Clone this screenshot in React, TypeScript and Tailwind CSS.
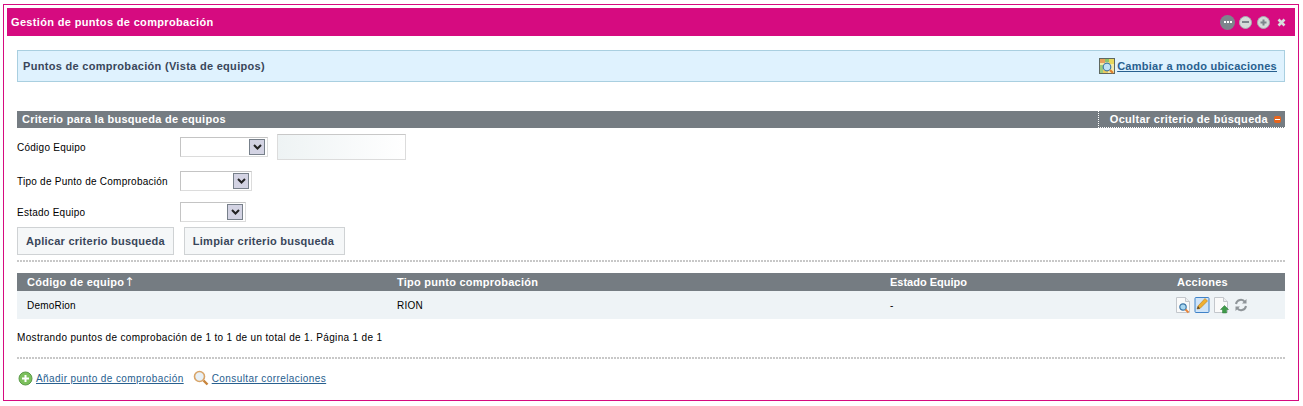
import { ReactNode } from 'react';

const SANS = "font-['Liberation_Sans',Arial,sans-serif]";

function FakeSelect({ width }: { width: string }) {
    return (
        <div className={`${width} h-[20px] flex items-center justify-end pr-[2px] bg-white border border-[#dcdcdc] border-t-[#c4c4c4] border-l-[#c4c4c4]`}>
            <div className="w-[16px] h-[16px] flex items-center justify-center bg-[#d3d3e3] border border-[#77808a]">
                <svg width="9" height="6" viewBox="0 0 9 6">
                    <path d="M1 1 L4.5 4.5 L8 1" fill="none" stroke="#222" strokeWidth="2" />
                </svg>
            </div>
        </div>
    );
}

function FormRow({ label, height, children }: { label: string; height: string; children: ReactNode }) {
    return (
        <div className={`flex items-center ${height}`}>
            <label className="w-[163px] text-[10px] text-black tracking-[0.25px]">{label}</label>
            {children}
        </div>
    );
}

function WindowButton({ children, className }: { children: ReactNode; className: string }) {
    return <div className={`rounded-full flex items-center justify-center ${className}`}>{children}</div>;
}

function MapIcon() {
    return (
        <svg width="16" height="16" viewBox="0 0 16 16" className="shrink-0">
            <rect x="0.5" y="0.5" width="15" height="15" fill="#f4e9a8" stroke="#5f6860" />
            <path d="M1 1h5v4H1z" fill="#e8a05c" />
            <path d="M6 1h4v3H6z" fill="#8cc46c" />
            <path d="M10 1h5v5h-5z" fill="#e9d85c" />
            <path d="M1 7h3v8H1z" fill="#9ccc7c" />
            <path d="M4 12h5v3H4z" fill="#e9c860" />
            <circle cx="8" cy="9" r="3.8" fill="#bfe2f6" stroke="#3f78a8" strokeWidth="1.2" />
            <path d="M11 12l3 3" stroke="#e08030" strokeWidth="2.200" />
        </svg>
    );
}

function DocBase({ children }: { children?: ReactNode }) {
    return (
        <svg width="16" height="18" viewBox="0 0 16 18" className="shrink-0">
            <path d="M1.5 1.5h9l4 4v11h-13z" fill="#fafafa" stroke="#c3c7cc" />
            <path d="M10.5 1.5v4h4" fill="#eceef0" stroke="#c3c7cc" />
            {children}
        </svg>
    );
}

function ActionIcons() {
    return (
        <div className="flex items-center gap-[3px]">
            <DocBase>
                <circle cx="8" cy="11" r="3.2" fill="#a9d8f2" stroke="#3f78a8" strokeWidth="1.2" />
                <path d="M10.5 13.5l3 3" stroke="#e8843a" strokeWidth="2" />
            </DocBase>
            <svg width="16" height="18" viewBox="0 0 16 18" className="shrink-0">
                <rect x="1" y="1.5" width="14" height="15" rx="1" fill="#cfe4f8" stroke="#3f82c8" />
                <path d="M3 13 L4 10 L11 2.5 L13.5 5 L6 12.5z" fill="#f0b030" stroke="#b87818" strokeWidth="0.6" />
                <path d="M3 13l1-3 2 2.5z" fill="#5a4a30" />
            </svg>
            <DocBase>
                <path d="M11.5 9.5l4 4h-2v3.5h-4V13.500h-2z" fill="#3f9a4a" stroke="#2c7a38" strokeWidth="0.5" />
            </DocBase>
            <svg width="14" height="14" viewBox="0 0 14 14" className="shrink-0 ml-[2px]">
                <path d="M2 6a5 5 0 0 1 9-2" fill="none" stroke="#8f9599" strokeWidth="2" />
                <path d="M12.500 1v4.500H8z" fill="#8f9599" />
                <path d="M12 8a5 5 0 0 1-9 2" fill="none" stroke="#8f9599" strokeWidth="2" />
                <path d="M1.500 13V8.500H6z" fill="#8f9599" />
            </svg>
        </div>
    );
}

function Dotted() {
    return <div className="h-[2px] bg-[repeating-linear-gradient(90deg,#c8c8c8_0,#c8c8c8_2px,#ffffff_2px,#ffffff_3px)]" />;
}

export default function App() {
    return (
        <div className={`w-[1303px] h-[406px] bg-white pt-[4px] pl-[3px] ${SANS}`}>
            <div className="w-[1296px] h-[397px] border border-[#d60b80] pt-[3px] pl-[3px]">
                {/* Title bar */}
                <div className="w-[1288px] h-[28px] bg-[#d60b80] flex items-center justify-between pl-[4px] pr-[9px]">
                    <h1 className="text-[11px] font-bold text-white tracking-[0.34px]">Gestión de puntos de comprobación</h1>
                    <div className="flex items-center gap-[4px]">
                        <WindowButton className="w-[15px] h-[15px] bg-[#7d858c] gap-[1px]">
                            <span className="w-[2px] h-[2px] bg-white" />
                            <span className="w-[2px] h-[2px] bg-white" />
                            <span className="w-[2px] h-[2px] bg-white" />
                        </WindowButton>
                        <WindowButton className="w-[13px] h-[13px] bg-[#d5dbd9] border border-[#a9b0b2]">
                            <span className="w-[7px] h-[2px] bg-[#7d858c]" />
                        </WindowButton>
                        <WindowButton className="w-[13px] h-[13px] ml-[1px] bg-[#d5dbd9] border border-[#a9b0b2]">
                            <svg width="7" height="7" viewBox="0 0 7 7">
                                <path d="M3.500 0.500v6M0.500 3.500h6" stroke="#7d858c" strokeWidth="2" />
                            </svg>
                        </WindowButton>
                        <svg width="9" height="9" viewBox="0 0 9 9" className="ml-[3px] mt-[1px]">
                            <path d="M1.500 1.500l6 6M7.500 1.500l-6 6" stroke="#d8dedc" strokeWidth="2.600" />
                        </svg>
                    </div>
                </div>

                <div className="w-[1268px] ml-[10px]">
                    {/* Info box */}
                    <div className="mt-[14px] h-[32px] bg-[#dff2fe] border border-[#a9cfe0] flex items-center justify-between pl-[5px] pr-[7px]">
                        <h2 className="text-[11px] font-bold text-[#39465a] tracking-[0.3px]">Puntos de comprobación (Vista de equipos)</h2>
                        <a className="flex items-center gap-[2px] text-[11px] font-bold text-[#28608f] underline tracking-[0.27px]">
                            <MapIcon />
                            Cambiar a modo ubicaciones
                        </a>
                    </div>

                    {/* Search criteria */}
                    <div className="mt-[29px] h-[17px] bg-[#757c82] flex items-center justify-between pl-[5px]">
                        <span className="text-[11px] font-bold text-white tracking-[0.28px]">Criterio para la busqueda de equipos</span>
                        <div className="w-[187px] h-full border-l border-b border-dotted border-white flex items-center justify-end gap-[6px] pr-[4px]">
                            <span className="text-[11px] font-bold text-white tracking-[0.3px]">Ocultar criterio de búsqueda</span>
                            <span className="w-[7px] h-[7px] rounded-[2px] bg-[#e8651c] flex items-center justify-center">
                                <span className="w-[5px] h-[1px] bg-white" />
                            </span>
                        </div>
                    </div>

                    <div className="mt-[6px]">
                        <FormRow label="Código Equipo" height="h-[26px]">
                            <FakeSelect width="w-[88px]" />
                            <div className="ml-[9px] w-[129px] h-[26px] border border-[#dcdcdc] border-t-[#c8c8c8] bg-gradient-to-r from-[#eef3f4] to-white" />
                        </FormRow>
                    </div>
                    <div className="mt-[9px]">
                        <FormRow label="Tipo de Punto de Comprobación" height="h-[24px]">
                            <FakeSelect width="w-[72px]" />
                        </FormRow>
                    </div>
                    <div className="mt-[7px]">
                        <FormRow label="Estado Equipo" height="h-[24px]">
                            <FakeSelect width="w-[66px]" />
                        </FormRow>
                    </div>

                    <div className="mt-[3px] flex gap-[10px]">
                        <button className="w-[157px] h-[28px] bg-[#f5f7f8] border border-[#cfd2d4] text-[11px] font-bold text-[#39465a] tracking-[0.25px]">Aplicar criterio busqueda</button>
                        <button className="w-[161px] h-[28px] pr-[2px] bg-[#f5f7f8] border border-[#cfd2d4] text-[11px] font-bold text-[#39465a] tracking-[0.25px]">Limpiar criterio busqueda</button>
                    </div>

                    <div className="mt-[5px]">
                        <Dotted />
                    </div>

                    {/* Table */}
                    <div className="mt-[11px] grid grid-cols-[370px_493px_287px_118px]">
                        <div className="h-[18px] bg-[#757c82] pl-[10px] flex items-center text-[11px] font-bold text-white tracking-[0.28px]">
                            Código de equipo<span className="font-['DejaVu_Sans',sans-serif] font-normal text-[12px]">↑</span>
                        </div>
                        <div className="h-[18px] bg-[#757c82] pl-[10px] flex items-center text-[11px] font-bold text-white tracking-[0.25px]">Tipo punto comprobación</div>
                        <div className="h-[18px] bg-[#757c82] pl-[10px] flex items-center text-[11px] font-bold text-white tracking-[0px]">Estado Equipo</div>
                        <div className="h-[18px] bg-[#757c82] pl-[10px] flex items-center text-[11px] font-bold text-white tracking-[0.25px]">Acciones</div>
                        <div className="h-[28px] bg-[#eef3f6] pl-[10px] flex items-center text-[10px] text-black tracking-[0.2px]">DemoRion</div>
                        <div className="h-[28px] bg-[#eef3f6] pl-[10px] flex items-center text-[10px] text-black tracking-[0.2px]">RION</div>
                        <div className="h-[28px] bg-[#eef3f6] pl-[10px] flex items-center text-[10px] text-black tracking-[0.2px]">-</div>
                        <div className="h-[28px] bg-[#eef3f6] pl-[8px] flex items-center">
                            <ActionIcons />
                        </div>
                    </div>

                    <p className="mt-[13px] h-[12px] leading-[12px] text-[10px] text-black tracking-[0.34px]">Mostrando puntos de comprobación de 1 to 1 de un total de 1. Página 1 de 1</p>

                    <div className="mt-[13px]">
                        <Dotted />
                    </div>

                    {/* Links */}
                    <div className="mt-[11px] flex items-center gap-[9px] text-[10px] text-[#28608f] tracking-[0.41px]">
                        <a className="flex items-center gap-[3px] underline">
                            <svg width="15" height="15" viewBox="0 0 15 15" className="ml-[1px] shrink-0">
                                <circle cx="7.500" cy="7.500" r="6.500" fill="#7cc05c" stroke="#5a9a48" />
                                <path d="M7.500 4v7M4 7.500h7" stroke="#fff" strokeWidth="2" />
                            </svg>
                            Añadir punto de comprobación
                        </a>
                        <a className="flex items-center gap-[3px] underline">
                            <svg width="16" height="16" viewBox="0 0 16 16" className="shrink-0">
                                <circle cx="6.500" cy="6.500" r="5" fill="#e8f0f6" stroke="#d8a468" strokeWidth="1.600" />
                                <path d="M10.500 10.500l4 4" stroke="#c8843c" strokeWidth="2.400" />
                            </svg>
                            Consultar correlaciones
                        </a>
                    </div>
                </div>
            </div>
        </div>
    );
}
